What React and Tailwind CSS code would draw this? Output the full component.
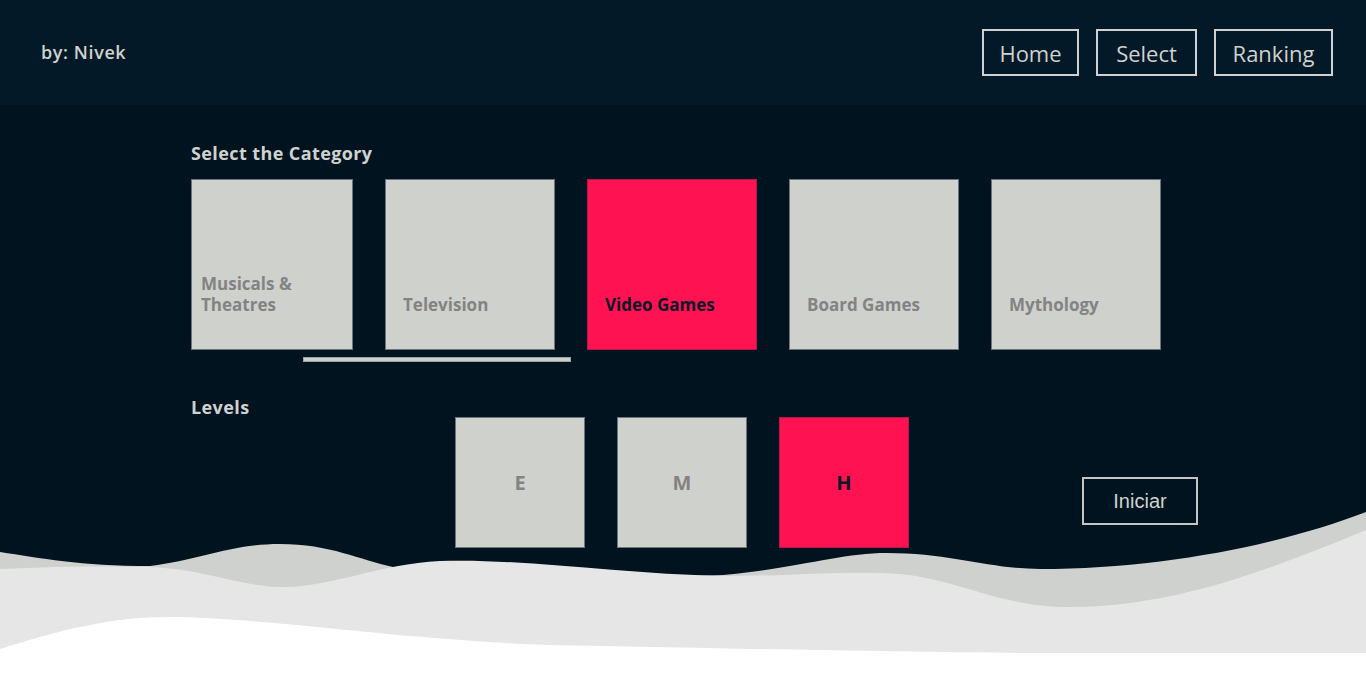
import React, { useState } from 'react';

const categories = [
  { name: 'Musicals & Theatres', narrow: true },
  { name: 'Television' },
  { name: 'Video Games' },
  { name: 'Board Games' },
  { name: 'Mythology' },
];

const levels = ['E', 'M', 'H'];

const navItems = [
  { label: 'Home', w: 'w-[97px]' },
  { label: 'Select', w: 'w-[101px]' },
  { label: 'Ranking', w: 'w-[119px]' },
];

const Waves = () => (
  <svg
    className="absolute left-0 bottom-0 w-full h-[187px]"
    viewBox="0 0 1366 187"
    preserveAspectRatio="none"
  >
    <path
      fill="#cfd1ce"
      d="M0 52 C40 58 80 66 150 66 C200 60 230 44 280 44 C330 44 360 60 393 67 C500 80 650 78 723 75 C800 68 840 53 887 53 C950 53 990 69 1040 69 C1160 69 1280 45 1366 12 L1366 187 L0 187 Z"
    />
    <path
      fill="#e6e6e6"
      d="M0 69 C60 66 110 66 150 67 C210 70 240 87 285 87 C330 87 380 64 440 61 C520 58 620 74 723 76 C790 76 850 70 900 74 C960 80 1000 107 1070 107 C1180 107 1280 65 1366 30 L1366 187 L0 187 Z"
    />
    <path
      fill="#ffffff"
      d="M0 149 C60 130 110 117 170 117 C260 117 400 140 550 145 C700 148 900 152 1030 153 L1366 153 L1366 187 L0 187 Z"
    />
  </svg>
);

const App = () => {
  const [category, setCategory] = useState('Video Games');
  const [level, setLevel] = useState('H');

  return (
    <div className="min-h-[687px] bg-[#00131f] text-[#cfd2cf] font-['Open_Sans','Noto_Sans',sans-serif] relative overflow-hidden">
      <header className="bg-[#031927] h-[105px] flex justify-between items-center pl-[41px] pr-[33px]">
        <span className="text-[18px] font-semibold tracking-[0.6px]">by: Nivek</span>
        <nav className="flex gap-[17px]">
          {navItems.map((item) => (
            <button
              key={item.label}
              className={`${item.w} h-[47px] border-2 border-[#cfd2cf] text-[22px] leading-none`}
            >
              {item.label}
            </button>
          ))}
        </nav>
      </header>

      <main className="relative z-10">
        <div className="pl-[191px] pt-[38px]">
          <h2 className="text-[18px] font-bold leading-[20px] tracking-[0.4px]">Select the Category</h2>
          <div className="flex gap-[32px] mt-[16px]">
            {categories.map((c) => {
              const active = category === c.name;
              return (
                <button
                  key={c.name}
                  onClick={() => setCategory(c.name)}
                  className={`${c.narrow ? 'w-[162px] px-[9px]' : 'w-[170px] px-[17px]'} h-[171px] flex items-end pb-[34px] text-left border text-[17px] font-bold leading-[21px] ${
                    active
                      ? 'bg-[#ff1252] border-[#b8154a] text-[#0b1826]'
                      : 'bg-[#cfd1cd] border-[#6c757c] text-[#838383]'
                  }`}
                >
                  {c.name}
                </button>
              );
            })}
          </div>
          <div className="ml-[112px] mt-[7px] w-[268px] h-[5px] bg-[#cfd1cd] border border-[#9da1a3]" />
          <h2 className="text-[18px] font-bold leading-[20px] tracking-[0.4px] mt-[35px]">Levels</h2>
        </div>

        <div className="grid grid-cols-[1fr_auto_1fr]">
          <div />
          <div className="flex gap-[32px] pr-[2px]">
            {levels.map((l) => {
              const active = level === l;
              return (
                <button
                  key={l}
                  onClick={() => setLevel(l)}
                  className={`w-[130px] h-[131px] flex items-center justify-center border text-[20px] font-bold ${
                    active
                      ? 'bg-[#ff1252] border-[#b8154a] text-[#0b1826]'
                      : 'bg-[#cfd1cd] border-[#6c757c] text-[#838383]'
                  }`}
                >
                  {l}
                </button>
              );
            })}
          </div>
          <div className="flex items-end pb-[23px]">
            <button className="ml-[171px] w-[116px] h-[48px] border-2 border-[#c4c6c4] text-[20px] font-['Liberation_Sans',Arial,sans-serif] text-[#cfd2cf]">
              Iniciar
            </button>
          </div>
        </div>
      </main>

      <Waves />
    </div>
  );
};

export default App;
